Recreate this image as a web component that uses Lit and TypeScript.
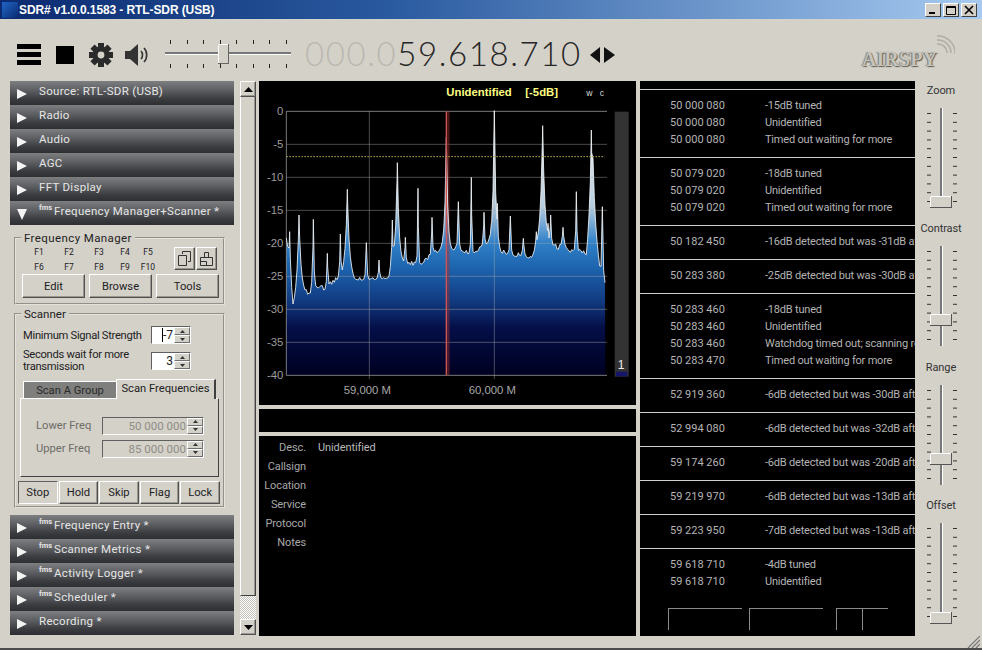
import { LitElement, html, css, svg } from "lit";
import { customElement } from "lit/decorators.js";

const BASE: [number, number][] = [[85,480],[92,520],[105,680],[112,660],[125,610],[140,635],[155,650],[162,620],[175,622],[200,632],[225,610],[250,590],[262,560],[275,565],[290,600],[340,600],[392,595],[402,545],[430,548],[480,560],[500,545],[550,510],[560,505],[575,515],[600,510],[640,525],[680,500],[709,470],[730,520],[780,530],[820,535],[840,500],[855,480],[875,490],[900,510],[915,495],[940,520],[975,520],[985,535],[995,440],[1010,480],[1025,570],[1035,575],[1042,615]];
const PEAKS: [number, number, number][] = [[95,455,2],[123,405,5],[166,418,2],[208,520,2],[247,462,2],[268,328,5],[325,488,2],[363,540,2],[403,420,2],[418,248,5],[442,472,2],[480,325,1.5],[522,412,2],[565,172,4.5],[601,365,2],[640,292,1.5],[678,397,2],[700,430,3],[709,92,4],[718,370,2],[757,408,2],[796,475,3],[835,455,3],[854,137,6],[870,430,2],[878,405,2],[915,442,3],[955,335,2],[1000,150,4],[1005,235,6],[1033,380,1.5]];

function baseAt(x: number) {
  for (let i = 1; i < BASE.length; i++) {
    if (x <= BASE[i][0]) {
      const [a, b] = BASE[i - 1];
      const [c, d] = BASE[i];
      return b + ((d - b) * (x - a)) / (c - a);
    }
  }
  return 615;
}

function curve() {
  let seed = 77;
  const xs = new Set<number>();
  for (let x = 85; x <= 1042; x += 4) xs.add(x);
  PEAKS.forEach((p) => xs.add(p[0]));
  const list = [...xs].sort((a, b) => a - b);
  return list.map((x) => {
    seed = (seed * 1103515245 + 12345) & 0x7fffffff;
    const noise = ((seed >> 8) % 25) - 12;
    const b = baseAt(x);
    let y = b + noise;
    for (const [px, py, w] of PEAKS) {
      const c = b - (b - py) * Math.exp(-Math.abs(x - px) / w);
      if (c < y) y = c;
    }
    return [x, Math.round(y)];
  });
}

const POINTS = curve();
const LINE = POINTS.map((p) => p.join(",")).join(" ");
const AREA = `85,886 ${LINE} 1042,886`;

const TOP = ["Source: RTL-SDR (USB)", "Radio", "Audio", "AGC", "FFT Display"];
const BOTTOM: [string, boolean][] = [["Frequency Entry *", true], ["Scanner Metrics *", true], ["Activity Logger *", true], ["Scheduler *", true], ["Recording *", false]];
const LOG: [string, string][][] = [
  [["50 000 080", "-15dB tuned"], ["50 000 080", "Unidentified"], ["50 000 080", "Timed out waiting for more"]],
  [["50 079 020", "-18dB tuned"], ["50 079 020", "Unidentified"], ["50 079 020", "Timed out waiting for more"]],
  [["50 182 450", "-16dB detected but was -31dB after"]],
  [["50 283 380", "-25dB detected but was -30dB after"]],
  [["50 283 460", "-18dB tuned"], ["50 283 460", "Unidentified"], ["50 283 460", "Watchdog timed out; scanning resumed"], ["50 283 470", "Timed out waiting for more"]],
  [["52 919 360", "-6dB detected but was -30dB after"]],
  [["52 994 080", "-6dB detected but was -32dB after"]],
  [["59 174 260", "-6dB detected but was -20dB after"]],
  [["59 219 970", "-6dB detected but was -13dB after"]],
  [["59 223 950", "-7dB detected but was -13dB after"]],
  [["59 618 710", "-4dB tuned"], ["59 618 710", "Unidentified"]],
];
const SLIDERS: [string, number][] = [["Zoom", 94], ["Contrast", 74], ["Range", 74], ["Offset", 95]];
const KEYS = ["F1", "F2", "F3", "F4", "F5", "F6", "F7", "F8", "F9", "F10"];
const DB = [0, -5, -10, -15, -20, -25, -30, -35, -40];

@customElement("app-root")
export class AppRoot extends LitElement {
  static styles = css`
    :host { display: flex; flex-direction: column; width: 982px; height: 650px; overflow: hidden; background: #d4d1c9; font-family: Roboto, "Liberation Sans", sans-serif; font-size: 11px; color: #222; }
    * { box-sizing: border-box; }
    .title { height: 19px; flex: none; display: flex; align-items: center; background: linear-gradient(90deg, #0b2a70 0%, #2a5aa0 40%, #a6caf0 100%); padding: 0 5px 0 2px; }
    .appicon { width: 16px; height: 16px; background: linear-gradient(135deg, #1f66c8, #0a2a70); }
    .title b { margin-left: 1px; color: #fff; font-size: 12px; letter-spacing: -0.1px; font-family: "Liberation Sans", sans-serif; font-weight: 700; white-space: nowrap; }
    .winbtns { margin-left: auto; display: flex; gap: 2px; }
    .winbtn { width: 16px; height: 14px; background: #d4d0c8; border: 1px solid; border-color: #fff #404040 #404040 #fff; display: flex; align-items: center; justify-content: center; }
    .winbtn svg { display: block; }
    .tools { height: 62px; flex: none; display: flex; align-items: center; padding: 10px 27px 0 17px; }
    .tools svg { display: block; flex: none; }
    .ml15 { margin-left: 15px; }
    .ml12 { margin-left: 12px; }
    .vol { margin-top: -2px; }
    .freq { margin-left: 14px; width: 275px; font-family: Lato, sans-serif; font-weight: 300; font-size: 33px; letter-spacing: 1.6px; white-space: nowrap; color: #262626; line-height: 1; margin-top: -3px; }
    .freq span { color: #bab8b0; }
    .arrows { margin-left: 10px; }
    .logo { margin-left: auto; display: flex; align-items: flex-start; height: 36px; margin-top: -4px; }
    .logo b { font-family: "Liberation Serif", serif; font-size: 20px; font-weight: 700; letter-spacing: 0.1px; color: #c6c4bb; text-shadow: 1px 1px 1px #5e5c56, -1px 0 1px #7a7870; margin-top: 13px; }
    .main { height: 555px; flex: none; display: flex; padding-left: 10px; }
    .left { width: 224px; flex: none; display: flex; flex-direction: column; }
    .bar { height: 24px; flex: none; display: flex; align-items: center; background: linear-gradient(180deg, #7d7f81 0%, #5b5d60 40%, #3a3c3f 75%, #2d2f32 100%); color: #e6e6e6; padding: 0 0 5px 7px; font-size: 11.5px; letter-spacing: 0.3px; white-space: nowrap; }
    .bar svg { margin-right: 12px; margin-top: 6px; flex: none; }
    .bar sup { font-size: 7.5px; line-height: 1; margin-right: 2px; align-self: flex-start; margin-top: 3px; font-weight: 700; letter-spacing: 0; }
    .panel { height: 290px; flex: none; padding: 7px 9px 0 4px; display: flex; flex-direction: column; gap: 3px; font-size: 11.2px; }
    fieldset { margin: 0; padding: 0; border: 2px groove #e6e3db; min-width: 0; }
    legend { margin-left: 5px; padding: 0 3px; font-size: 11.5px; line-height: 12px; }
    .fm legend { letter-spacing: 0.4px; }
    .fm { height: 73px; }
    .fm .in { padding: 3px 4px 0 6px; }
    .fm-top { display: flex; height: 27px; }
    .keys { display: grid; grid-template-columns: 30px 30px 30px 22px 24px; grid-auto-rows: 15px; font-size: 8.5px; padding-left: 2px; justify-items: center; align-items: center; width: 152px; flex: none; margin-top: -3px; align-content: start; }
    .icons { display: flex; gap: 1px; height: 23px; }
    .ib { width: 21px; height: 23px; display: flex; align-items: center; justify-content: center; }
    .btn { background: #d4d1c9; border: 1px solid; border-color: #fff #505050 #505050 #fff; box-shadow: inset -1px -1px #9a978f; display: flex; align-items: center; justify-content: center; }
    .fm-btns { display: flex; gap: 4px; }
    .fm-btns .btn { height: 24px; width: 63px; }
    .scan { height: 200px; }
    .scan .in { padding: 0 3px; }
    .row { display: flex; align-items: center; padding-left: 4px; height: 18px; margin-top: 6px; justify-content: space-between; padding-right: 29px; letter-spacing: -0.3px; }
    .row.two { margin-top: 8px; line-height: 12px; }
    .spin { display: flex; width: 40px; height: 18px; background: #fff; border: 1px solid; border-color: #606060 #fff #fff #606060; flex: none; letter-spacing: 0; }
    .spin .v { flex: 1; text-align: right; padding-right: 1px; font-size: 12px; line-height: 16px; }
    .caret { border-left: 1px solid #000; }
    .arr { width: 16px; display: flex; flex-direction: column; flex: none; background: #d4d1c9; }
    .arr i { flex: 1; display: flex; align-items: center; justify-content: center; border: 1px solid; border-color: #fff #707070 #707070 #fff; font-size: 0; }
    .arr svg { display: block; }
    .tabs { display: flex; align-items: flex-end; margin: 8px 0 0 4px; height: 20px; }
    .tab1 { width: 93px; height: 17px; background: #7f7f7d; color: #2a2a2a; display: flex; align-items: center; justify-content: center; border-top: 1px solid #fff; border-left: 1px solid #fff; }
    .tab2 { width: 100px; height: 20px; background: #d4d1c9; display: flex; align-items: center; justify-content: center; border: 1px solid #fff; border-right: 2px solid #404040; border-bottom: none; padding-bottom: 2px; margin-bottom: -1px; position: relative; }
    .tabbody { height: 79px; margin: 0 1px; border: 1px solid; border-color: #fff #404040 #404040 #fff; padding-top: 17px; color: #6e6c66; }
    .fr { display: flex; align-items: center; height: 19px; margin-bottom: 4px; padding-left: 15px; }
    .fr label { width: 66px; flex: none; }
    .fr .spin { width: 102px; background: #d4d1c9; }
    .fr .v { color: #8f8d86; font-size: 11.5px; }
    .scan-btns { display: flex; gap: 1px; margin: 4px 0 0 -1px; }
    .scan-btns .btn { width: 40px; height: 23px; }
    .scan-btns .btn.on { border-color: #606060 #fff #fff #606060; box-shadow: none; }
    .sb { width: 16px; flex: none; margin-left: 6px; display: flex; flex-direction: column; height: 554px; }
    .sb .btn { height: 16px; flex: none; }
    .sb .th { height: 499px; flex: none; border-bottom: 1px solid #404040; border-right: 1px solid #404040; border-left: 1px solid #fff; box-shadow: inset -1px 0 #9a978f; }
    .sb .track { flex: 1; background: repeating-conic-gradient(#fff 0 25%, #c4c1b9 0 50%) 0 0 / 2px 2px; }
    .center { width: 377px; flex: none; margin-left: 3px; display: flex; flex-direction: column; gap: 4px; }
    .spec { height: 324px; flex: none; background: #000; }
    .spec svg { display: block; }
    .strip { height: 23px; flex: none; background: #000; }
    .info { flex: 1; background: #000; color: #a8a8a8; display: grid; grid-template-columns: 47px 1fr; grid-auto-rows: 19px; column-gap: 12px; padding-top: 2px; align-content: start; align-items: center; letter-spacing: -0.1px; }
    .info .k { text-align: right; }
    .info .val { color: #b8b8b8; }
    .log { width: 275px; flex: none; margin-left: 4px; background: #000; padding-top: 8px; overflow: hidden; color: #b4b4b4; white-space: nowrap; display: flex; flex-direction: column; letter-spacing: -0.2px; }
    .grp { border-top: 1px solid #cfcfcf; padding: 7px 0 9px; flex: none; }
    .lr { display: flex; height: 17px; align-items: center; padding-left: 30px; }
    .lr .f { width: 95px; flex: none; letter-spacing: 0; }
    .boxes { display: flex; margin: 9px 0 0 28px; }
    .box { height: 22px; border-top: 1px solid #8a8a8a; border-left: 1px solid #8a8a8a; width: 74px; flex: none; }
    .box.b { margin-left: 7px; }
    .box.c { margin-left: 13px; width: 26px; }
    .box.d { width: 26px; }
    .sliders { width: 55px; flex: none; display: flex; flex-direction: column; }
    .sl { height: 138.4px; flex: none; display: flex; flex-direction: column; align-items: center; color: #333; padding-right: 3px; }
    .sl span { height: 18px; line-height: 20px; font-size: 11px; letter-spacing: -0.1px; }
    .sl svg { display: block; margin-top: 9px; }
    .foot { flex: 1; display: flex; justify-content: flex-end; align-items: flex-end; border-bottom: 2px solid #4c4c4c; padding-right: 2px; }
    .foot svg { display: block; }
  `;

  bar(label: string, fms: boolean, open = false) {
    return html`<div class="bar">
      <svg width="10" height="12" viewBox="0 0 10 12">
        ${open ? svg`<polygon points="0,1 10,1 5,12" fill="#f4f4f4"/>` : svg`<polygon points="0,1 10,6 0,11" fill="#f4f4f4"/>`}
      </svg>
      ${fms ? html`<sup>fms</sup>` : ""}${label}
    </div>`;
  }

  spin(v: string, caret = false) {
    return html`<div class="spin"><div class="v">${caret ? html`<span class="caret">${v}</span>` : v}</div><div class="arr">
      <i><svg width="5" height="3"><polygon points="0,3 5,3 2.5,0" fill="#333"/></svg></i>
      <i><svg width="5" height="3"><polygon points="0,0 5,0 2.5,3" fill="#333"/></svg></i>
    </div></div>`;
  }

  slider(thumb: number) {
    const ticks = Array.from({ length: 11 }, (_, i) => 5 + i * 8.8);
    return html`<svg width="40" height="106" viewBox="0 0 40 106">
      ${ticks.map((y) => svg`<rect x="6" y=${y} width="4" height="1" fill="#333"/><rect x="32" y=${y} width="4" height="1" fill="#333"/>`)}
      <rect x="19" y="0" width="2" height="100" fill="#777"/><rect x="21" y="0" width="1" height="100" fill="#fff"/>
      <rect x="9.500" y=${thumb - 5.5} width="21" height="11" fill="#d4d1c9" stroke="#555" stroke-width="1"/>
      <path d="M9.500 ${thumb + 5}V${thumb - 5.5}H30" stroke="#fff" fill="none"/>
    </svg>`;
  }

  spectrum() {
    return html`<svg width="377" height="324" viewBox="3 3 1131 972" font-family="Liberation Sans, sans-serif">
      <defs>
        <linearGradient id="g" gradientUnits="userSpaceOnUse" x1="0" y1="90" x2="0" y2="886">
          <stop offset="0" stop-color="#f4f4f4"/>
          <stop offset="0.36" stop-color="#b8cee0"/>
          <stop offset="0.5" stop-color="#2f80c8"/>
          <stop offset="0.6" stop-color="#1c62ac"/>
          <stop offset="0.72" stop-color="#113a80"/>
          <stop offset="0.82" stop-color="#040f48"/>
          <stop offset="1" stop-color="#000020"/>
        </linearGradient>
      </defs>
      <polygon points=${AREA} fill="url(#g)"/>
      ${DB.map((d, i) => {
        const y = 94 + i * 99;
        return svg`<line x1="85" x2="1047" y1=${y} y2=${y} stroke="#aaa" stroke-opacity=${i === 0 || i === 8 ? 0.9 : 0.55} stroke-width="2.4"/>
        <text x="76" y=${y + 11} text-anchor="end" font-size="34" fill="#9c9c9c">${d}</text>`;
      })}
      <line x1="85" x2="85" y1="94" y2="886" stroke="#999" stroke-width="2.4"/>
      <line x1="334" x2="334" y1="94" y2="897" stroke="#aaa" stroke-opacity="0.55" stroke-width="2.4"/>
      <line x1="709" x2="709" y1="94" y2="897" stroke="#aaa" stroke-opacity="0.55" stroke-width="2.4"/>
      <rect x="566" y="94" width="9" height="792" fill="#a03030" fill-opacity="0.45"/>
      <polyline points=${LINE} fill="none" stroke="#eef2f6" stroke-width="2.6" stroke-linejoin="round"/>
      <rect x="563" y="94" width="4" height="792" fill="#d05454"/>
      <line x1="85" x2="1040" y1="230" y2="230" stroke="#b0a040" stroke-width="3" stroke-dasharray="5 4"/>
      <text x="565" y="49" font-size="34" font-weight="700" fill="#ffff80">Unidentified</text>
      <text x="802" y="49" font-size="34" font-weight="700" fill="#ffff80">[-5dB]</text>
      <text x="985" y="47" font-size="26" fill="#ddd">w</text>
      <text x="1025" y="47" font-size="26" fill="#ddd">c</text>
      <text x="328" y="942" text-anchor="middle" font-size="34" fill="#a8a8a8">59,000 M</text>
      <text x="703" y="942" text-anchor="middle" font-size="34" fill="#a8a8a8">60,000 M</text>
      <rect x="1070" y="95" width="42" height="795" fill="#333"/>
      <rect x="1074" y="875" width="34" height="14" fill="#15156a"/>
      <text x="1089" y="867" text-anchor="middle" font-size="36" fill="#eee">1</text>
    </svg>`;
  }

  render() {
    return html`
      <div class="title">
        <div class="appicon"></div><b>SDR# v1.0.0.1583 - RTL-SDR (USB)</b>
        <div class="winbtns">
          <div class="winbtn"><svg width="10" height="10"><rect x="1" y="7" width="6" height="2" fill="#000"/></svg></div>
          <div class="winbtn"><svg width="10" height="10"><path d="M.5 1.5h9v8h-9zM.5 2.5h9" fill="none" stroke="#000"/></svg></div>
          <div class="winbtn"><svg width="10" height="10"><path d="M1 1l8 8M9 1l-8 8" stroke="#000" stroke-width="1.6"/></svg></div>
        </div>
      </div>
      <div class="tools">
        <svg width="24" height="22" viewBox="0 0 24 22"><rect y="0" width="24" height="5" fill="#000"/><rect y="8" width="24" height="5" fill="#000"/><rect y="16" width="24" height="5" fill="#000"/></svg>
        <svg class="ml15" width="18" height="18"><rect width="18" height="18" fill="#000"/></svg>
        <svg class="ml15" width="24" height="24" viewBox="-12 -12 24 24">
          ${[0, 45, 90, 135].map((a) => svg`<rect x="-3" y="-12" width="6" height="24" fill="#2a2a2a" transform="rotate(${a})"/>`)}
          <circle r="8.5" fill="#2a2a2a"/><circle r="3.4" fill="#d4d1c9"/>
        </svg>
        <svg class="ml12" width="25" height="24" viewBox="0 0 25 24">
          <path d="M0 8h5l8-7v22l-8-7H0z" fill="#333"/>
          <path d="M16 8c2 2 2 6 0 8M19 5c3.600 3.600 3.600 10.400 0 14" fill="none" stroke="#333" stroke-width="1.6"/>
        </svg>
        <svg class="ml15 vol" width="126" height="28" viewBox="0 0 126 28">
          ${[5, 22, 38, 55, 71, 88, 104, 121].map((x) => svg`<rect x=${x} y="0" width="1" height="4" fill="#222"/><rect x=${x} y="24" width="1" height="4" fill="#222"/>`)}
          <rect x="0" y="12" width="126" height="2" fill="#777"/><rect x="0" y="14" width="126" height="1" fill="#fff"/>
          <rect x="53.500" y="4.500" width="10" height="19" fill="#d4d1c9" stroke="#666"/>
          <path d="M53.500 23V4.500H63" fill="none" stroke="#fff"/>
        </svg>
        <div class="freq"><span>000.0</span>59.618.710</div>
        <svg class="arrows" width="25" height="16" viewBox="0 0 25 16"><polygon points="10,0 10,16 0,8" fill="#111"/><polygon points="14,0 14,16 25,8" fill="#111"/></svg>
        <div class="logo"><b>AIRSPY</b>
          <svg width="18" height="24" viewBox="0 0 18 24"><path d="M0 7a9 9 0 0 1 10 9M0 3a13 13 0 0 1 14 13M0 -1a17 17 0 0 1 18 18" transform="translate(0 2)" fill="none" stroke="#aeaca4" stroke-width="1.500"/></svg>
        </div>
      </div>
      <div class="main">
        <div class="left">
          ${TOP.map((t) => this.bar(t, false))}
          ${this.bar("Frequency Manager+Scanner *", true, true)}
          <div class="panel">
            <fieldset class="fm">
              <legend>Frequency Manager</legend>
              <div class="in">
                <div class="fm-top">
                  <div class="keys">${KEYS.map((k) => html`<span>${k}</span>`)}</div>
                  <div class="icons">
                    <div class="btn ib"><svg width="15" height="15" viewBox="0 0 15 15"><path d="M5.500 3V.5h8v10H11M1.500 4.500h8v10h-8z" fill="none" stroke="#333"/></svg></div>
                    <div class="btn ib"><svg width="15" height="15" viewBox="0 0 15 15"><path d="M1.500 6.500h12v8h-12zM5.500 6.500v-5h4v5M1.500 10.500h6v4" fill="none" stroke="#333"/></svg></div>
                  </div>
                </div>
                <div class="fm-btns"><div class="btn">Edit</div><div class="btn">Browse</div><div class="btn">Tools</div></div>
              </div>
            </fieldset>
            <fieldset class="scan">
              <legend>Scanner</legend>
              <div class="in">
                <div class="row first"><span>Minimum Signal Strength</span>${this.spin("-7", true)}</div>
                <div class="row two"><span>Seconds wait for more<br />transmission</span>${this.spin("3")}</div>
                <div class="tabs"><div class="tab1">Scan A Group</div><div class="tab2">Scan Frequencies</div></div>
                <div class="tabbody">
                  <div class="fr"><label>Lower Freq</label>${this.spin("50 000 000")}</div>
                  <div class="fr"><label>Upper Freq</label>${this.spin("85 000 000")}</div>
                </div>
                <div class="scan-btns"><div class="btn on">Stop</div><div class="btn">Hold</div><div class="btn">Skip</div><div class="btn">Flag</div><div class="btn">Lock</div></div>
              </div>
            </fieldset>
          </div>
          ${BOTTOM.map(([t, f]) => this.bar(t, f))}
        </div>
        <div class="sb">
          <div class="btn"><svg width="9" height="5"><polygon points="0,5 9,5 4.500,0" fill="#000"/></svg></div>
          <div class="th"></div>
          <div class="track"></div>
          <div class="btn"><svg width="9" height="5"><polygon points="0,0 9,0 4.500,5" fill="#000"/></svg></div>
        </div>
        <div class="center">
          <div class="spec">${this.spectrum()}</div>
          <div class="strip"></div>
          <div class="info">
            <span class="k">Desc.</span><span class="val">Unidentified</span>
            <span class="k">Callsign</span><span></span>
            <span class="k">Location</span><span></span>
            <span class="k">Service</span><span></span>
            <span class="k">Protocol</span><span></span>
            <span class="k">Notes</span><span></span>
          </div>
        </div>
        <div class="log">
          ${LOG.map((g) => html`<div class="grp">${g.map(([f, m]) => html`<div class="lr"><span class="f">${f}</span><span>${m}</span></div>`)}</div>`)}
          <div class="boxes"><div class="box"></div><div class="box b"></div><div class="box c"></div><div class="box d"></div></div>
        </div>
        <div class="sliders">
          ${SLIDERS.map(([n, t]) => html`<div class="sl"><span>${n}</span>${this.slider(t)}</div>`)}
        </div>
      </div>
      <div class="foot">
        <svg width="14" height="12" viewBox="0 0 14 12"><path d="M2 12L14 0M6 12L14 4M10 12l4-4" stroke="#777" stroke-width="1.200"/></svg>
      </div>
    `;
  }
}
